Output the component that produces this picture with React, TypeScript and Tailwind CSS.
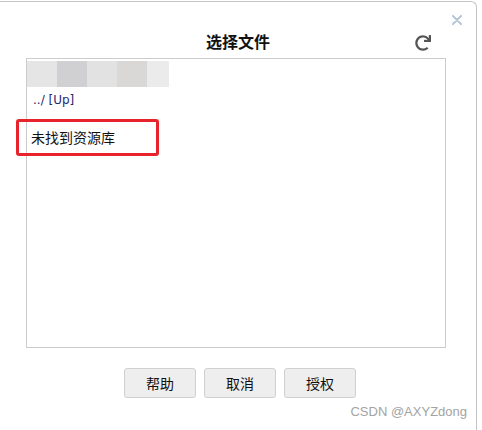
import { FaRedo } from "react-icons/fa";

const strip = ["bg-[#e5e5e5]", "bg-[#d0d0d2]", "bg-[#e1e2e1]", "bg-[#d9d8d6]", "bg-[#ebebeb]"];

export default function App() {
  return (
    <div className="relative h-[430px] w-[482px] overflow-hidden bg-white font-['Noto_Sans_CJK_SC',sans-serif]">
      <div className="relative mt-px h-[440px] w-[477px] rounded-tr-[6px] border-t border-r border-[#c4c4c4] bg-white">
        {/* close */}
        <svg className="absolute left-[452px] top-[13px]" width="10" height="10" viewBox="0 0 10 10">
          <path d="M1 1 L9 9 M9 1 L1 9" stroke="#b5c5d6" strokeWidth="2" strokeLinecap="round" />
        </svg>

        <div className="relative flex h-[56px] items-end justify-center pb-[8px]">
          <h1 className="text-[16px] font-bold leading-[18px] text-[#111]">选择文件</h1>
          <FaRedo className="absolute left-[415px] top-[33px] text-[16px] text-[#555]" />
        </div>

        <div className="relative ml-[26px] h-[290px] w-[420px] border border-[#cccccc] pt-[2px]">
          <div className="flex h-[26px]">
            {strip.map((c, i) => (
              <div key={i} className={`${c} ${i === 4 ? "w-[22px]" : "w-[30px]"}`} />
            ))}
          </div>
          <div className="mt-[5px] pl-[6px] font-['DejaVu_Sans',sans-serif] text-[12px] leading-[16px] text-[#1c2a6e]">
            ../ [Up]
          </div>
          <div className="mt-[20px] pl-[4px] text-[14px] leading-[18px] text-[#111]">未找到资源库</div>
        </div>

        <div className="mt-[20px] flex justify-center gap-[8px] pl-[4px]">
          {["帮助", "取消", "授权"].map((t) => (
            <button
              key={t}
              className="h-[30px] w-[72px] rounded-[3px] border border-[#d0d0d0] bg-[#eeeeee] text-[14px] text-[#111]"
            >
              {t}
            </button>
          ))}
        </div>
      </div>

      {/* annotation */}
      <div className="absolute left-[16px] top-[119px] h-[37px] w-[143px] rounded-[3px] border-[3px] border-[#e8232c]" />

      <div className="absolute right-[15px] top-[404px] font-['Liberation_Sans',sans-serif] text-[13px] leading-[16px] text-[#a3a3a3]">
        CSDN @AXYZdong
      </div>
    </div>
  );
}
